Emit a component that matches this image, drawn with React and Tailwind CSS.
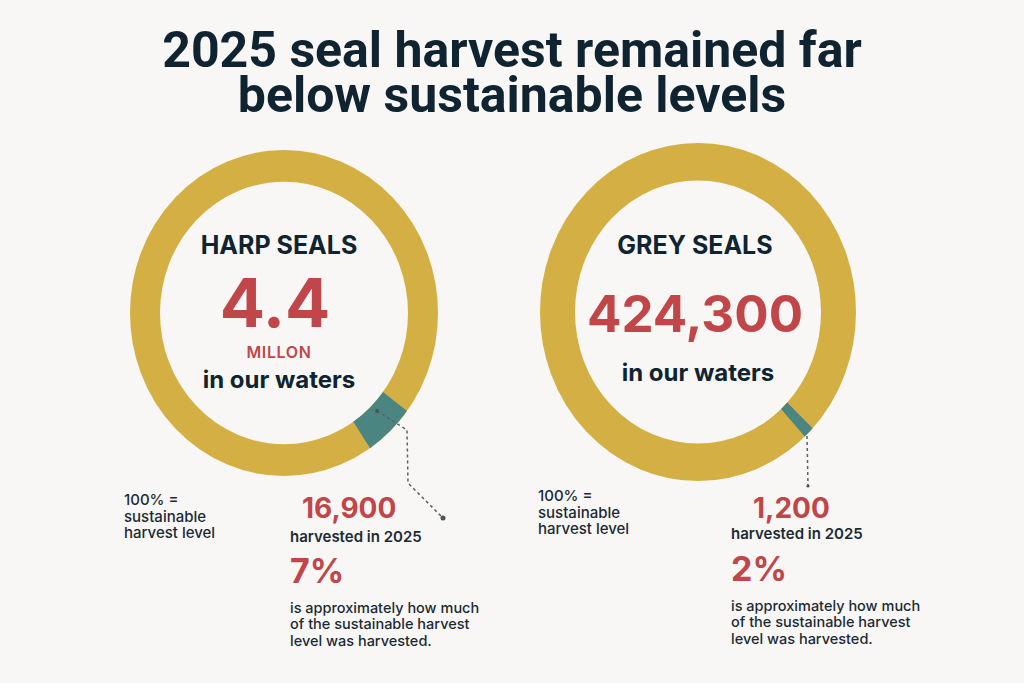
const gold = "#d4b044";
const teal = "#4b8581";

function Donut({ size, height, r, stroke, from, to }) {
  const c = size / 2;
  const rad = (d) => (d * Math.PI) / 180;
  const p = (d) => [c + r * Math.cos(rad(d)), c + r * Math.sin(rad(d))];
  const [x1, y1] = p(from);
  const [x2, y2] = p(to);
  return (
    <svg width={size} height={height} viewBox={`0 0 ${size} ${size}`} preserveAspectRatio="none" className="absolute inset-0">
      <circle cx={c} cy={c} r={r} fill="none" stroke={gold} strokeWidth={stroke} />
      <path d={`M${x1} ${y1} A${r} ${r} 0 0 1 ${x2} ${y2}`} fill="none" stroke={teal} strokeWidth={stroke} />
    </svg>
  );
}

function Note({ value, valueIndent, pct, gapA, gapB, gapC, padTop }) {
  return (
    <div className="flex flex-col" style={{ paddingTop: padTop }}>
      <div className={`text-[28px] leading-[28px] font-bold text-[#c0464a] ${valueIndent}`}>{value}</div>
      <div className={`text-[15px] leading-[16.5px] font-semibold text-[#1b2a33] ${gapA}`}>harvested in 2025</div>
      <div className={`text-[34px] leading-[34px] font-bold text-[#c0464a] ${gapB}`}>{pct}</div>
      <div className={`text-[14.5px] leading-[16.5px] font-medium text-[#1b2a33] whitespace-nowrap ${gapC}`}>
        is approximately how much
        <br />
        of the sustainable harvest
        <br />
        level was harvested.
      </div>
    </div>
  );
}

function Legend() {
  return (
    <div className="text-[15px] leading-[16.5px] font-medium text-[#1b2a33]">
      100% =
      <br />
      sustainable
      <br />
      harvest level
    </div>
  );
}

export default function App() {
  return (
    <div className="relative w-[1024px] h-[683px] overflow-hidden bg-[#f8f7f5] text-[#0f2430] [font-family:Inter,'Liberation_Sans',sans-serif]">
      <h1 className="pt-[28px] text-center text-[50px] leading-[45px] font-bold [font-family:Roboto,'Liberation_Sans',sans-serif]">
        2025 seal harvest remained far
        <br />
        below sustainable levels
      </h1>

      <div className="flex">
        {/* harp seals */}
        <div className="ml-[124px] w-[414px] flex flex-col">
          <div className="relative ml-[6px] mt-[32px] w-[308px] h-[326px]">
            <Donut size={308} height={326} r={139} stroke={30} from={37} to={56} />
            <div className="relative flex flex-col items-center pt-[83px] pr-[10px] font-bold">
              <div className="text-[25px] leading-[25px]">HARP SEALS</div>
              <div className="mt-[11px] pr-[8px] text-[67px] leading-[67px] text-[#c0464a]">4.4</div>
              <div className="mt-[8px] text-[16px] leading-[16px] font-semibold tracking-[0.04em] text-[#c0464a]">MILLON</div>
              <div className="mt-[8px] text-[24px] leading-[24px]">in our waters</div>
            </div>
          </div>
          <div className="flex mt-[16px]">
            <div className="w-[166px]">
              <Legend />
            </div>
            <Note value="16,900" valueIndent="pl-[12px]" pct="7%" gapA="mt-[7px]" gapB="mt-[8px]" gapC="mt-[12px]" padTop={2} />
          </div>
        </div>

        {/* grey seals */}
        <div className="flex flex-col">
          <div className="relative ml-[2px] mt-[25px] w-[316px] h-[338px]">
            <Donut size={316} height={338} r={140.5} stroke={35} from={43.5} to={47.5} />
            <div className="relative flex flex-col items-center pt-[90px] pr-[6px] font-bold">
              <div className="text-[25px] leading-[25px]">GREY SEALS</div>
              <div className="mt-[30px] text-[51px] leading-[51px] text-[#c0464a]">424,300</div>
              <div className="mt-[22px] pl-[6px] text-[24px] leading-[24px]">in our waters</div>
            </div>
          </div>
          <div className="flex mt-[7px]">
            <div className="w-[193px]">
              <Legend />
            </div>
            <Note value="1,200" valueIndent="pl-[22px]" pct="2%" gapA="mt-[4px]" gapB="mt-[9px]" gapC="mt-[12px]" padTop={6} />
          </div>
        </div>
      </div>

      {/* leader lines */}
      <svg className="absolute inset-0 pointer-events-none" width="1024" height="683">
        <path d="M377 411 L407 430 L408 483 L442 517" fill="none" stroke="#5b6166" strokeWidth="1.5" strokeDasharray="3 3" />
        <circle cx="377" cy="411" r="2" fill="#4d5358" />
        <circle cx="443" cy="518" r="2.5" fill="#4d5358" />
        <path d="M807 436 L808 486" fill="none" stroke="#5b6166" strokeWidth="1.5" strokeDasharray="3 3" />
        <circle cx="808" cy="486" r="1.6" fill="#4d5358" />
      </svg>
    </div>
  );
}
